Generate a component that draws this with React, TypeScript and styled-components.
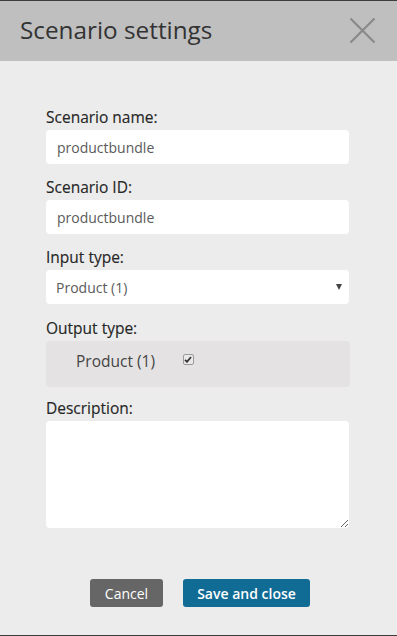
import styled, { createGlobalStyle } from "styled-components";

const GlobalStyle = createGlobalStyle`
html, body {
    margin: 0;
    padding: 0;
    background: #3c3c3c;
}
body {
    font-family: 'Open Sans', 'Liberation Sans', sans-serif;
}
`

const Dialog = styled.div`
width: 397px;
height: 634px;
margin-top: 1px;
background: #ececec;
display: flex;
flex-direction: column;
overflow: hidden;
`

const Header = styled.div`
height: 60px;
flex-shrink: 0;
background: #bfbfbf;
display: flex;
align-items: center;
justify-content: space-between;
padding: 0 21px 0 20px;
box-sizing: border-box;
h1 {
    margin: 0;
    font-size: 24.3px;
    font-weight: 400;
    color: #333;
    line-height: 1;
    padding-bottom: 1px;
}
`

const CloseButton = styled.button`
border: none;
background: none;
padding: 0;
width: 27px;
height: 27px;
margin-top: -2px;
cursor: pointer;
display: flex;
svg { display: block; }
`

const Form = styled.div`
flex: 1;
padding: 46px 48px 0 46px;
display: flex;
flex-direction: column;
`

const Label = styled.label<{ $gap?: number }>`
display: block;
margin-top: ${p => p.$gap ?? 13}px;
margin-bottom: 3px;
font-size: 15.5px;
line-height: 20px;
font-weight: 400;
color: #262626;
-webkit-text-stroke: 0.15px #262626;
&:first-child { margin-top: 0; }
`

const TextInput = styled.input`
box-sizing: border-box;
width: 303px;
height: 34px;
border: none;
border-radius: 4px;
background: #fff;
padding: 0 11px;
font-family: inherit;
font-size: 14px;
color: #5a5a5a;
outline: none;
`

const SelectWrap = styled.div`
position: relative;
width: 303px;
`

const Select = styled.select`
appearance: none;
box-sizing: border-box;
width: 303px;
height: 34px;
border: none;
border-radius: 4px;
background: #fff;
padding: 0 10px;
font-family: inherit;
font-size: 14px;
color: #5a5a5a;
outline: none;
`

const Arrow = styled.span`
position: absolute;
right: 7px;
top: 14px;
width: 0;
height: 0;
border-left: 3px solid transparent;
border-right: 3px solid transparent;
border-top: 6px solid #444;
pointer-events: none;
`

const OutputBox = styled.div`
box-sizing: border-box;
width: 304px;
height: 46px;
background: #e4e2e3;
border-radius: 4px;
display: flex;
align-items: center;
padding: 0 0 6px 30px;
gap: 28px;
font-size: 15.5px;
color: #444;
`

const Check = styled.span`
box-sizing: border-box;
width: 11px;
height: 11px;
border: 1px solid #9a9a9a;
border-radius: 2px;
background: #e9e9e9;
display: flex;
align-items: center;
justify-content: center;
margin-top: -4px;
`

const TextArea = styled.textarea`
box-sizing: border-box;
width: 303px;
height: 107px;
border: none;
border-radius: 4px;
background: #fff;
resize: vertical;
outline: none;
font-family: inherit;
font-size: 13px;
`

const Footer = styled.div`
display: flex;
justify-content: center;
gap: 20px;
padding: 0 0 28px 3px;
`

const Button = styled.button<{ $primary?: boolean }>`
height: 28px;
width: ${p => p.$primary ? 127 : 73}px;
border: none;
border-radius: 3px;
padding: 0;
background: ${p => p.$primary ? '#106b95' : '#666666'};
color: #fff;
font-family: inherit;
font-size: 14px;
font-weight: ${p => p.$primary ? 600 : 400};
cursor: pointer;
`

export default function App(): JSX.Element {
    return <>
        <GlobalStyle />
        <Dialog>
            <Header>
                <h1>Scenario settings</h1>
                <CloseButton aria-label="Close">
                    <svg width="27" height="27" viewBox="0 0 27 27">
                        <path d="M1.5 1.5 L25.5 25.5 M25.5 1.5 L1.5 25.5" stroke="#8a8a8a" strokeWidth="2.2" fill="none" />
                    </svg>
                </CloseButton>
            </Header>
            <Form>
                <Label>Scenario name:</Label>
                <TextInput defaultValue="productbundle" />
                <Label>Scenario ID:</Label>
                <TextInput defaultValue="productbundle" />
                <Label>Input type:</Label>
                <SelectWrap>
                    <Select defaultValue="product">
                        <option value="product">Product (1)</option>
                    </Select>
                    <Arrow />
                </SelectWrap>
                <Label $gap={14}>Output type:</Label>
                <OutputBox>
                    <span>Product (1)</span>
                    <Check>
                        <svg width="8" height="7" viewBox="0 0 8 7">
                            <path d="M1 3.8 L3 5.8 L7 1" stroke="#333" strokeWidth="1.8" fill="none" />
                        </svg>
                    </Check>
                </OutputBox>
                <Label $gap={11}>Description:</Label>
                <TextArea />
            </Form>
            <Footer>
                <Button>Cancel</Button>
                <Button $primary>Save and close</Button>
            </Footer>
        </Dialog>
    </>
}
